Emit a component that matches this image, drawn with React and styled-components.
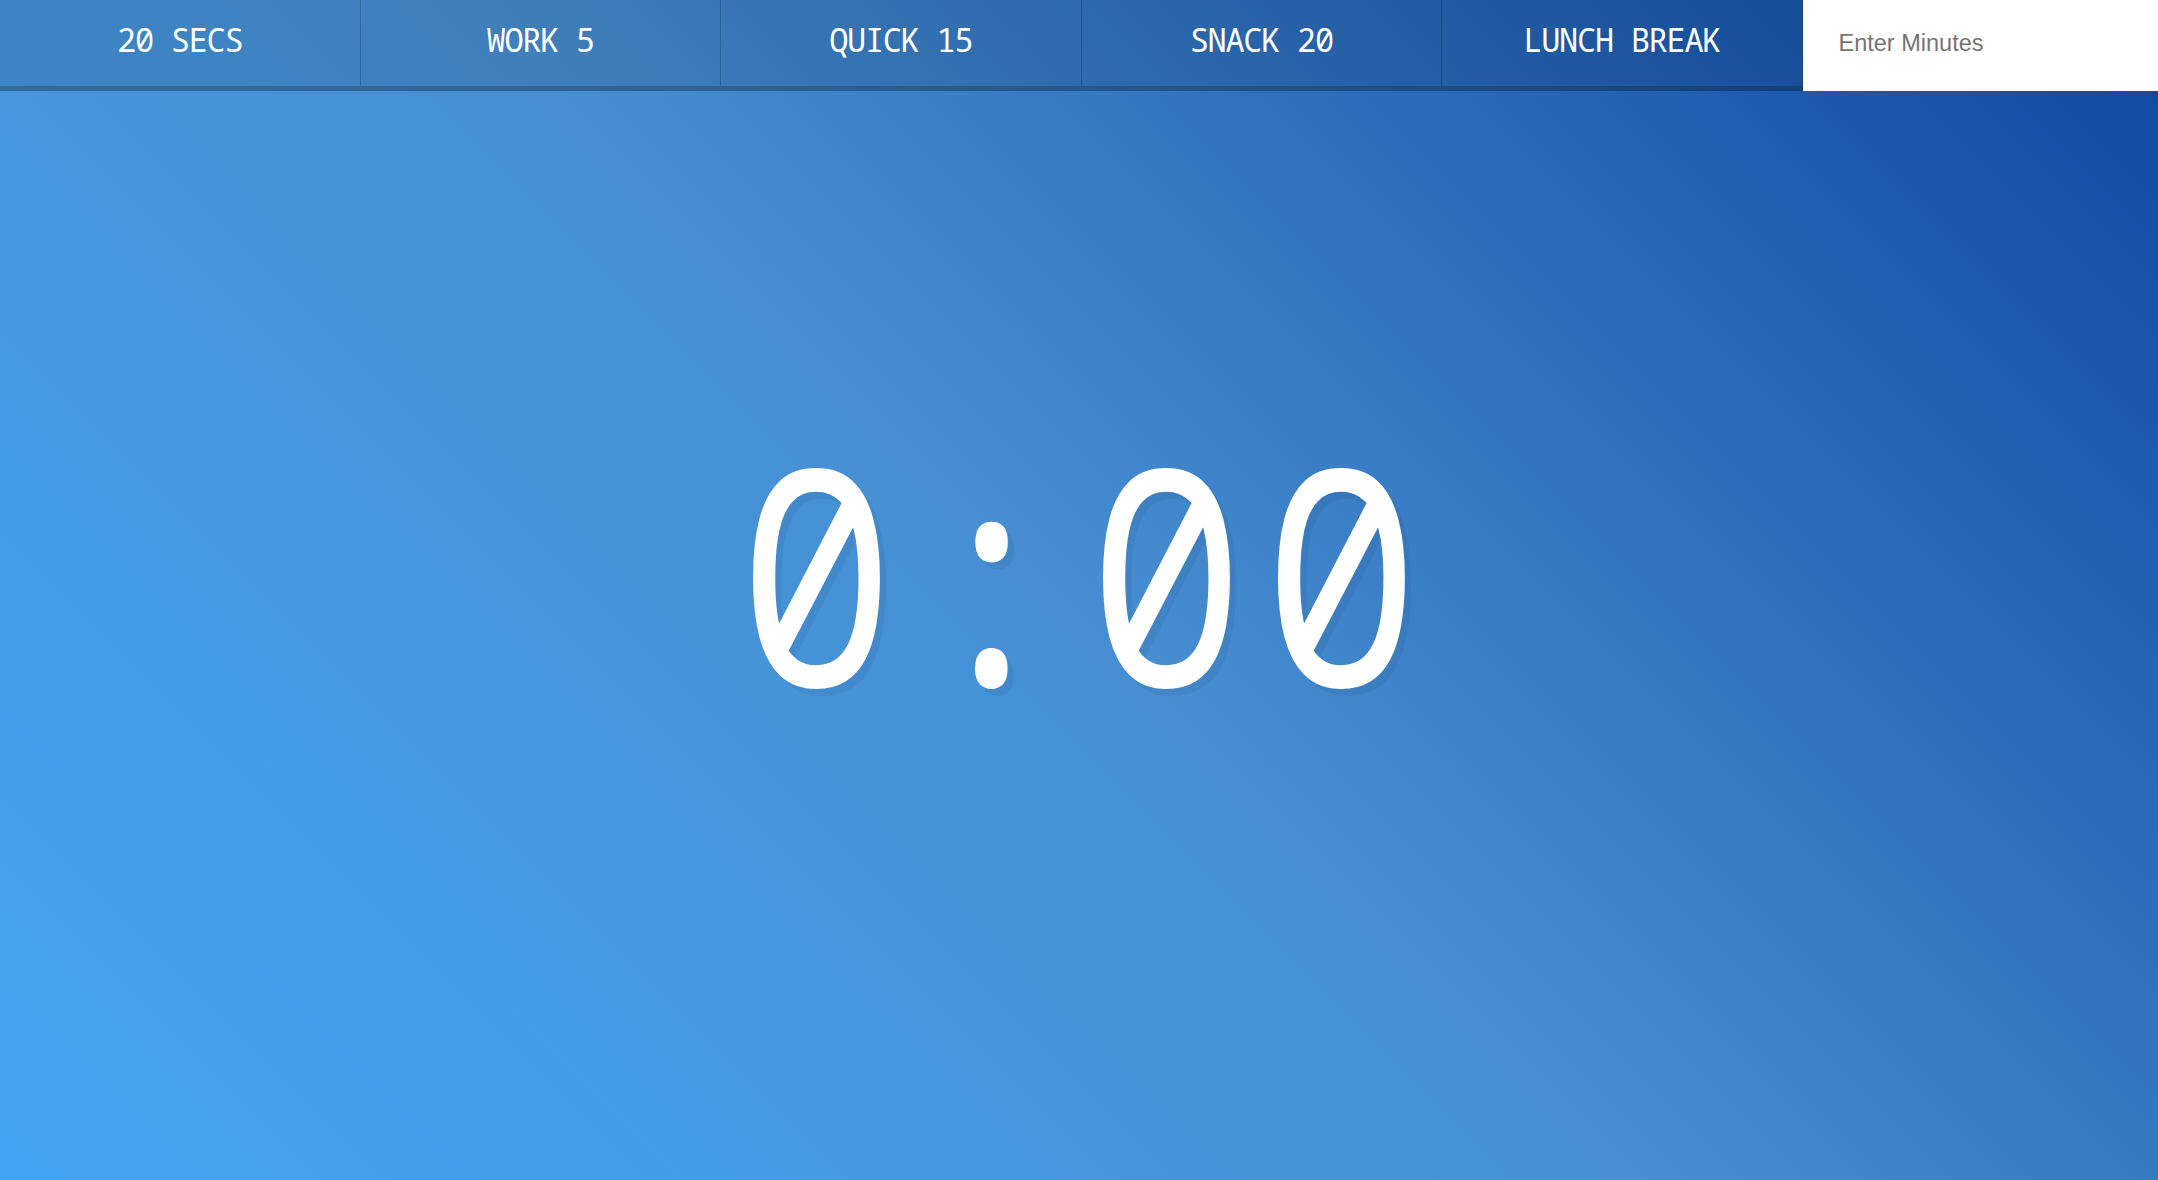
import React from "react";
import styled, { createGlobalStyle } from "styled-components";

const GlobalStyle = createGlobalStyle`
  *, *::before, *::after { box-sizing: border-box; }
  html {
    min-height: 100%;
    background: linear-gradient(45deg, #42a5f5 0%, #478ed1 50%, #0d47a1 100%);
  }
  body {
    margin: 0;
    text-align: center;
    font-family: "Noto Sans Mono", "DejaVu Sans Mono", monospace;
  }
`;

const Timer = styled.div`
  display: flex;
  flex-direction: column;
  min-height: 100vh;
  overflow: hidden;
`;

const Controls = styled.div`
  display: flex;
  height: 91px;
`;

const TimerButton = styled.button`
  flex: 1 1 0;
  min-width: 0;
  background: rgba(0, 0, 0, 0.1);
  border: 0;
  border-bottom: 5px solid rgba(0, 0, 0, 0.2);
  border-right: 1px solid rgba(0, 0, 0, 0.2);
  color: #ffffff;
  cursor: pointer;
  font-family: "Noto Sans Mono", "DejaVu Sans Mono", monospace;
  font-size: 32px;
  letter-spacing: -1.3px;
  text-transform: uppercase;
  padding: 14px 2px 20px;
  line-height: 52px;
  white-space: nowrap;
`;

const MinutesForm = styled.form`
  flex: 1 1 0;
  display: flex;
  min-width: 0;
`;

const MinutesInput = styled.input`
  flex: 1;
  min-width: 0;
  border: 0;
  outline: 0;
  background: #ffffff;
  padding: 0 34px 5px 36px;
  font-family: "Liberation Sans", Arial, sans-serif;
  font-size: 23.5px;
  color: #333;
  &::placeholder {
    color: #757575;
  }
`;

const Display = styled.div`
  flex: 1;
  display: flex;
  flex-direction: column;
  align-items: center;
  justify-content: center;
`;

const TimeLeft = styled.h1`
  margin: 0;
  color: #ffffff;
  font-family: "Noto Sans Mono", "DejaVu Sans Mono", monospace;
  font-weight: 400;
  font-size: 301px;
  line-height: 1;
  letter-spacing: 18.7px;
  padding-left: 18.7px;
  transform: scaleX(0.878);
  text-shadow: 7px 7px 0 rgba(0, 0, 0, 0.05);
  white-space: nowrap;
`;

const EndTime = styled.p`
  margin: 66px 0 67px;
  font-size: 68px;
  color: #ffffff;
`;

const presets = ["20 Secs", "Work 5", "Quick 15", "Snack 20", "Lunch Break"];

export default function App() {
  return (
    <>
      <GlobalStyle />
      <Timer>
        <Controls>
          {presets.map((p) => (
            <TimerButton key={p} type="button">
              {p}
            </TimerButton>
          ))}
          <MinutesForm onSubmit={(e) => e.preventDefault()}>
            <MinutesInput type="text" name="minutes" placeholder="Enter Minutes" />
          </MinutesForm>
        </Controls>
        <Display>
          <TimeLeft>0:00</TimeLeft>
          <EndTime />
        </Display>
      </Timer>
    </>
  );
}
